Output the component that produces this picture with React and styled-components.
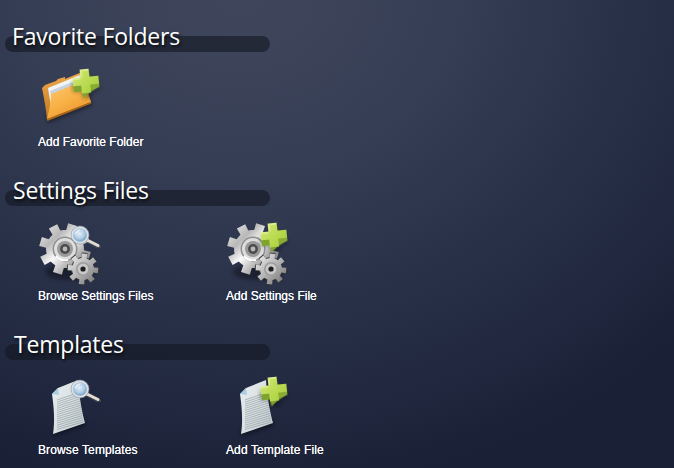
import React from "react";
import styled, { createGlobalStyle } from "styled-components";

const Global = createGlobalStyle`
  html, body { margin: 0; padding: 0; background: #1c2338; }
  #root { width: 674px; height: 468px; overflow: hidden; }
`;

const Page = styled.main`
  width: 674px;
  height: 468px;
  box-sizing: border-box;
  padding: 20px 0 0 5px;
  display: flex;
  flex-direction: column;
  gap: 25px;
  background: radial-gradient(ellipse 600px 500px at 240px -10px, #40475d 0%, #363e55 35%, #272f47 68%, #1a2137 100%);
  background-color: #1a2036;
  font-family: "Liberation Sans", Arial, sans-serif;
  overflow: hidden;
`;

const Section = styled.section`
  display: flex;
  flex-direction: column;
  gap: 10px;
`;

const Heading = styled.h2`
  position: relative;
  width: 265px;
  height: 34px;
  margin: 0;
  box-sizing: border-box;
  padding-left: ${(p) => p.$indent}px;
  font: 400 23px/33px "Open Sans", "Noto Sans", sans-serif;
  letter-spacing: -0.2px;
  color: #fff;
  text-shadow: 1px 2px 3px rgba(0, 0, 0, 0.75);
  white-space: nowrap;
  &::before {
    content: "";
    position: absolute;
    left: 0;
    right: 0;
    top: 16px;
    height: 16px;
    border-radius: 8px;
    background: rgba(20, 24, 34, 0.62);
  }
  & > span { position: relative; }
`;

const Tiles = styled.div`
  display: flex;
  padding-left: 33px;
`;

const Tile = styled.a`
  width: 188px;
  display: flex;
  flex-direction: column;
  align-items: flex-start;
  gap: 7px;
  color: #fff;
  font-size: 12px;
  line-height: 14px;
  letter-spacing: ${(p) => p.$track || 0}px;
  text-shadow: 0 0 0.6px #fff;
  white-space: nowrap;
`;

const IconBox = styled.svg`
  display: block;
  width: 64px;
  height: 64px;
  overflow: visible;
`;

const gearPath = (cx, cy, R, r, n, rot = 0) => {
  const pts = [];
  for (let i = 0; i < n; i++) {
    const a = rot + (i * 2 * Math.PI) / n;
    const s = (2 * Math.PI) / n;
    [[-0.5, r], [-0.3, r], [-0.23, R], [0.23, R], [0.3, r]].forEach(([k, rad]) => {
      pts.push([cx + rad * Math.cos(a + k * s), cy + rad * Math.sin(a + k * s)]);
    });
  }
  return "M" + pts.map((p) => p[0].toFixed(1) + " " + p[1].toFixed(1)).join("L") + "Z";
};

const Defs = () => (
  <defs>
    <linearGradient id="fFront" x1="0.1" y1="0" x2="0.7" y2="1">
      <stop offset="0" stopColor="#fcc96f" />
      <stop offset="0.55" stopColor="#f8b045" />
      <stop offset="1" stopColor="#e8922a" />
    </linearGradient>
    <linearGradient id="fBack" x1="0" y1="0" x2="0" y2="1">
      <stop offset="0" stopColor="#efa84a" />
      <stop offset="1" stopColor="#c27a24" />
    </linearGradient>
    <linearGradient id="plusTop" x1="0" y1="0" x2="1" y2="1">
      <stop offset="0" stopColor="#d3e874" />
      <stop offset="0.6" stopColor="#b7d94e" />
      <stop offset="1" stopColor="#a5ca3e" />
    </linearGradient>
    <linearGradient id="metal" x1="0" y1="0" x2="1" y2="1">
      <stop offset="0" stopColor="#f0f0f0" />
      <stop offset="0.3" stopColor="#b8b8b8" />
      <stop offset="0.48" stopColor="#fafafa" />
      <stop offset="0.72" stopColor="#a6a6a6" />
      <stop offset="1" stopColor="#6a6a6a" />
    </linearGradient>
    <linearGradient id="metal2" x1="0" y1="0" x2="1" y2="1">
      <stop offset="0" stopColor="#f1f1f1" />
      <stop offset="0.5" stopColor="#b4b4b4" />
      <stop offset="1" stopColor="#6d6d6d" />
    </linearGradient>
    <radialGradient id="lens" cx="0.45" cy="0.4" r="0.6">
      <stop offset="0" stopColor="#e4eff8" />
      <stop offset="0.6" stopColor="#b2cde6" />
      <stop offset="1" stopColor="#7aa0c4" />
    </radialGradient>
    <linearGradient id="paper" x1="0" y1="0" x2="1" y2="1">
      <stop offset="0" stopColor="#e9eef0" />
      <stop offset="0.5" stopColor="#dae1e3" />
      <stop offset="1" stopColor="#bcc7cb" />
    </linearGradient>
    <filter id="soft" x="-30%" y="-30%" width="160%" height="160%">
      <feGaussianBlur stdDeviation="2" />
    </filter>
    <filter id="aa" x="-10%" y="-10%" width="120%" height="120%">
      <feGaussianBlur stdDeviation="0.4" />
    </filter>
  </defs>
);

const Plus = ({ x, y }) => (
  <g transform={`translate(${x} ${y}) rotate(-6)`} filter="url(#aa)">
    <path d="M-5-8 5-8 5 4 14 4 14 7 5 10 5 15-5 15-5 8-14 8-14-2-5-2Z" fill="#000" opacity="0.35" filter="url(#soft)" />
    <path d="M-5-9 4-13 5 8-4 15-5 8-13 8-13-3-5-3Z" fill="#7ea32e" />
    <path d="M4-3 13-5 13 5 4 9Z" fill="#88ad33" />
    <path d="M-5-14 4-14 4-6 13-6 13 2 4 2 4 10-5 10-5 2-13 2-13-6-5-6Z" fill="url(#plusTop)" />
    <path d="M-5-14 4-14 4-12-3-12-3-6-5-6ZM-13-6-5-6-5-4-13-4Z" fill="#e6f3a0" opacity="0.65" />
  </g>
);

const Magnifier = ({ x, y }) => (
  <g transform={`translate(${x} ${y})`}>
    <path d="M6 5 19 12" stroke="#5f5f5f" strokeWidth="4" strokeLinecap="round" opacity="0.5" filter="url(#aa)" />
    <path d="M7 5 18 10.5" stroke="#e2dcd2" strokeWidth="3" strokeLinecap="round" />
    <circle r="9" fill="#d9dfe4" />
    <circle r="9" fill="none" stroke="#8b97a2" strokeWidth="0.6" />
    <circle r="6.8" fill="url(#lens)" />
    <path d="M-5-1C-4-4-2-5.5 1-5.5-2-4-3.5-2.5-4-.5Z" fill="#fff" opacity="0.85" />
  </g>
);

const Gears = () => (
  <g>
    <ellipse cx="32" cy="54" rx="25" ry="8" fill="#000" opacity="0.35" filter="url(#soft)" />
    <path d={gearPath(27, 31, 26, 19, 8, 0.3)} fill="url(#metal)" filter="url(#aa)" />
    <circle cx="27" cy="31" r="12.5" fill="#8f8f8f" />
    <circle cx="27" cy="31" r="11" fill="#dedede" />
    <circle cx="27" cy="31" r="8" fill="#9a9a9a" />
    <circle cx="27" cy="31" r="5" fill="#4c4c4c" />
    <circle cx="27" cy="31" r="2.4" fill="#b9b9b9" />
    <path d="M18 38a12 12 0 0 0 12 4" stroke="#fff" strokeWidth="2" fill="none" filter="url(#aa)" />
    <path d={gearPath(45, 51, 16.5, 12, 8, 0.1)} fill="#2f2f2f" opacity="0.8" filter="url(#aa)" />
    <path d={gearPath(45, 51, 15.5, 11, 8, 0.1)} fill="url(#metal2)" filter="url(#aa)" />
    <circle cx="45" cy="51" r="7" fill="#9d9d9d" />
    <circle cx="45" cy="51" r="5.4" fill="#c9c9c9" />
    <circle cx="45" cy="51" r="2.6" fill="#1f1f1f" />
  </g>
);

const Folder = () => (
  <g>
    <path d="M10 59 55 41 50 34 8 50Z" fill="#000" opacity="0.45" filter="url(#soft)" />
    <path d="M4 24 7 21 18 17 20 15 27 13 27 15 44 8 53 38 9 56C8 44 6 34 4 24Z" fill="url(#fBack)" filter="url(#aa)" />
    <path d="M10 24 42 11 46 28 13 42Z" fill="#f2f5f7" />
    <path d="M12 27 44 14 48 30 15 44Z" fill="#c8d3dd" />
    <path d="M9 55C12 44 13 36 13 30L45 17C47 25 50 32 53 38Z" fill="url(#fFront)" filter="url(#aa)" />
    <path d="M9 55 53 38 53.5 39.5 9.5 57Z" fill="#a8651a" />
  </g>
);

const Doc = () => (
  <g>
    <path d="M16 64 48 53 46 47 15 58Z" fill="#000" opacity="0.45" filter="url(#soft)" />
    <path d="M20 16 40 8C41 24 44 40 47 51L15 62C17 50 16 36 14 22Z" fill="url(#paper)" filter="url(#aa)" />
    <path d="M20 16 14 22 21 23Z" fill="#a7cfe0" />
    <g stroke="#8f9a9e" strokeWidth="0.8" opacity="0.8">
      {Array.from({ length: 15 }, (_, i) => {
        const y = 25 + i * 2.1;
        return <line key={i} x1={19} y1={y + 3} x2={41 + i * 0.3} y2={y - 4.5} />;
      })}
    </g>
  </g>
);

const Icon = ({ kind }) => {
  const [base, badge] = kind;
  return (
    <IconBox viewBox="0 0 64 64">
      <Defs />
      {base === "folder" && <Folder />}
      {base === "gears" && <Gears />}
      {base === "doc" && <Doc />}
      {badge === "plus" && <Plus x={48} y={19} />}
      {badge === "lens" && <Magnifier x={42} y={17} />}
    </IconBox>
  );
};

const sections = [
  { title: "Favorite Folders", indent: 7, items: [{ label: "Add Favorite Folder", icon: ["folder", "plus"] }] },
  {
    title: "Settings Files",
    indent: 8,
    items: [
      { label: "Browse Settings Files", icon: ["gears", "lens"] },
      { label: "Add Settings File", icon: ["gears", "plus"] },
    ],
  },
  {
    title: "Templates",
    indent: 9,
    items: [
      { label: "Browse Templates", icon: ["doc", "lens"], track: 0.12 },
      { label: "Add Template File", icon: ["doc", "plus"], track: 0.12 },
    ],
  },
];

export default function App() {
  return (
    <>
      <Global />
      <Page>
        {sections.map((s) => (
          <Section key={s.title}>
            <Heading $indent={s.indent}>
              <span>{s.title}</span>
            </Heading>
            <Tiles>
              {s.items.map((it) => (
                <Tile key={it.label} $track={it.track}>
                  <Icon kind={it.icon} />
                  {it.label}
                </Tile>
              ))}
            </Tiles>
          </Section>
        ))}
      </Page>
    </>
  );
}
